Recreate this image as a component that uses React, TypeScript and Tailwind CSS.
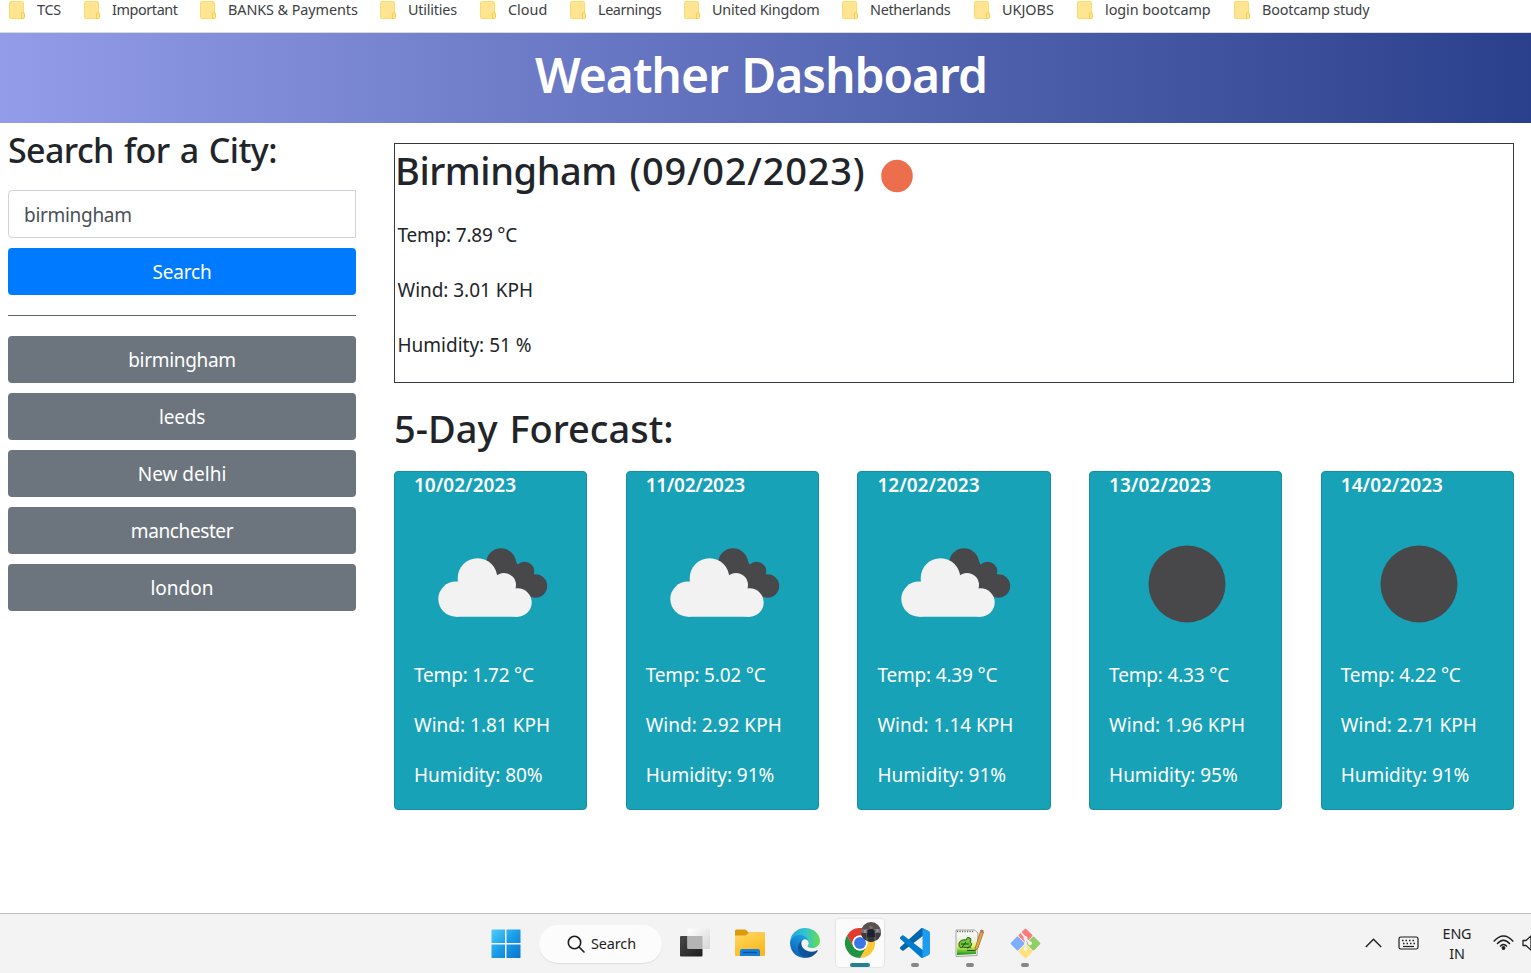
import React from "react";

const bookmarks = [
  { name: "TCS", box: "w-[75px]", track: "tracking-[-0.3px]" },
  { name: "Important", box: "w-[116px]", track: "tracking-[-0.4px]" },
  { name: "BANKS & Payments", box: "w-[180px]", track: "tracking-[-0.08px]" },
  { name: "Utilities", box: "w-[100px]", track: "tracking-[-0.2px]" },
  { name: "Cloud", box: "w-[90px]", track: "" },
  { name: "Learnings", box: "w-[114px]", track: "tracking-[-0.4px]" },
  { name: "United Kingdom", box: "w-[158px]", track: "tracking-[-0.2px]" },
  { name: "Netherlands", box: "w-[132px]", track: "tracking-[-0.3px]" },
  { name: "UKJOBS", box: "w-[103px]", track: "" },
  { name: "login bootcamp", box: "w-[157px]", track: "tracking-[-0.05px]" },
  { name: "Bootcamp study", box: "w-[157px]", track: "tracking-[-0.2px]" },
];

const cities = [
  { name: "birmingham", track: "tracking-[-0.3px]" },
  { name: "leeds", track: "tracking-[-0.2px]" },
  { name: "New delhi", track: "" },
  { name: "manchester", track: "tracking-[-0.4px]" },
  { name: "london", track: "" },
];

const forecast = [
  { date: "10/02/2023", track: "", icon: "cloud", temp: "1.72", wind: "1.81", humidity: "80" },
  { date: "11/02/2023", track: "tracking-[-0.3px]", icon: "cloud", temp: "5.02", wind: "2.92", humidity: "91" },
  { date: "12/02/2023", track: "", icon: "cloud", temp: "4.39", wind: "1.14", humidity: "91" },
  { date: "13/02/2023", track: "", icon: "clear", temp: "4.33", wind: "1.96", humidity: "95" },
  { date: "14/02/2023", track: "", icon: "clear", temp: "4.22", wind: "2.71", humidity: "91" },
];

function Folder() {
  return (
    <svg width="16" height="18" viewBox="0 0 16 18" className="shrink-0">
      <rect x="0.5" y="0.5" width="14" height="17" rx="1" fill="#ffe591" stroke="#fbdc6a" />
      <path d="M12.5 17.5v-4.5q0-1.500 1.500-1.500t1.500 1.500v3q0 1.500-1.500 1.500z" fill="#ffe591" stroke="#f5cf4e" />
    </svg>
  );
}

function CloudIcon() {
  return (
    <svg width="120" height="84" viewBox="0 0 120 84">
      <g fill="#484749">
        <circle cx="67" cy="21" r="14.800" />
        <circle cx="90.500" cy="29.500" r="9.800" />
        <circle cx="101.500" cy="44" r="11.700" />
        <path d="M56 30 80 14 84 24 100 34 104 50 98 55 84 50Z" />
      </g>
      <g fill="#f2f2f2">
        <circle cx="43.500" cy="36" r="19.800" />
        <circle cx="21.900" cy="57.100" r="17.600" />
        <circle cx="70" cy="43" r="12" />
        <circle cx="83.500" cy="60.500" r="14.200" />
        <path d="M22 74.700 24 36H62L81 44 84 74.700Z" />
      </g>
    </svg>
  );
}

function ClearIcon() {
  return (
    <svg width="120" height="84" viewBox="0 0 120 84">
      <circle cx="58" cy="42" r="38.500" fill="#484749" />
    </svg>
  );
}

function WindowsLogo() {
  return (
    <svg width="30" height="30" viewBox="0 0 30 30" className="shrink-0">
      <defs>
        <linearGradient id="win" x1="0" y1="0" x2="30" y2="30" gradientUnits="userSpaceOnUse">
          <stop stopColor="#4fd0fb" />
          <stop offset="0.500" stopColor="#1a9be6" />
          <stop offset="1" stopColor="#0a72d0" />
        </linearGradient>
      </defs>
      <path fill="url(#win)" d="M1 .5h13v13.500H.5V1zM15.500.5H29l.500.500v13H15.500zM.5 15.500H14V29H1l-.500-.5zM15.500 15.500h14v13l-.500.500H15.500z" />
    </svg>
  );
}

function TaskView() {
  return (
    <svg width="32" height="30" viewBox="0 0 32 30">
      <defs>
        <linearGradient id="tv1" x1="0" y1="0" x2="1" y2="1">
          <stop stopColor="#484848" />
          <stop offset="1" stopColor="#1e1e1e" />
        </linearGradient>
        <linearGradient id="tv2" x1="0" y1="0" x2="1" y2="1">
          <stop stopColor="#fff" />
          <stop offset="1" stopColor="#d6d6d6" />
        </linearGradient>
      </defs>
      <rect x="1" y="8" width="22.500" height="20.500" rx="1" fill="url(#tv1)" />
      <rect x="8.500" y="0.500" width="22.500" height="20.500" rx="1" fill="url(#tv2)" />
      <path d="M8.500 8h15v13h-14q-1 0-1-1z" fill="#b4b4b4" />
    </svg>
  );
}

function Explorer() {
  return (
    <svg width="32" height="30" viewBox="0 0 32 30">
      <defs>
        <linearGradient id="ex1" x1="0" y1="0" x2="0.500" y2="1">
          <stop stopColor="#ffd965" />
          <stop offset="1" stopColor="#fbb91c" />
        </linearGradient>
      </defs>
      <path d="M1 3q0-1.500 1.500-1.500h8q1.500 0 2.500 1.200L14.500 4.500H30q1 0 1 1V12H1z" fill="#dc9a0a" />
      <path d="M1 7.500h9.500q1.500 0 2.500-1L15 4.500h15q1 0 1 1V27q0 1-1 1H2q-1 0-1-1z" fill="url(#ex1)" />
      <path d="M6 28v-5q0-2 2-2h16q2 0 2 2v5z" fill="#1680d8" />
      <path d="M9.500 24.500h13" stroke="#0b4fa0" strokeWidth="1.400" strokeLinecap="round" />
    </svg>
  );
}

function Edge() {
  return (
    <svg width="30" height="30" viewBox="0 0 256 256">
      <defs>
        <linearGradient id="ed1" x1="60" y1="177" x2="241" y2="177" gradientUnits="userSpaceOnUse">
          <stop stopColor="#0c59a4" />
          <stop offset="1" stopColor="#114a8b" />
        </linearGradient>
        <linearGradient id="ed2" x1="150" y1="90" x2="40" y2="240" gradientUnits="userSpaceOnUse">
          <stop stopColor="#1b9de2" />
          <stop offset="0.500" stopColor="#1383d0" />
          <stop offset="1" stopColor="#0f5fb4" />
        </linearGradient>
        <linearGradient id="ed3" x1="10" y1="90" x2="245" y2="90" gradientUnits="userSpaceOnUse">
          <stop stopColor="#25a8df" />
          <stop offset="0.500" stopColor="#2fc3d4" />
          <stop offset="1" stopColor="#60dc57" />
        </linearGradient>
      </defs>
      <path fill="url(#ed1)" d="M231 190.500c-3.400 1.800-6.900 3.400-10.500 4.700a101.700 101.700 0 0 1-35.900 6.500c-47.300 0-88.500-32.500-88.500-74.300a31.500 31.500 0 0 1 16.400-27.300c-42.800 1.800-53.800 46.400-53.800 72.500 0 74 68.100 81.400 82.800 81.400 7.900 0 19.800-2.300 27-4.600l1.300-.4a128.300 128.300 0 0 0 66.600-52.800 4 4 0 0 0-5.400-5.700Z" />
      <path fill="url(#ed2)" d="M105.700 241.400a79.200 79.200 0 0 1-22.700-21.300 80.700 80.700 0 0 1 29.500-120c3.200-1.500 8.500-4.100 15.600-4a32.400 32.400 0 0 1 25.700 13 31.900 31.900 0 0 1 6.300 18.700c0-.2 24.500-79.600-80-79.600-43.900 0-80 41.700-80 78.200a130.200 130.200 0 0 0 12.100 56 128 128 0 0 0 156.400 67 75.500 75.500 0 0 1-62.900-8Z" />
      <path fill="url(#ed3)" d="M152.300 148.900c-.9 1-3.400 2.500-3.400 5.600 0 2.600 1.700 5.200 4.800 7.300 14.300 10 41.400 8.600 41.500 8.600a59.600 59.600 0 0 0 30.300-8.300 61.400 61.400 0 0 0 30.400-52.900c.3-22.400-8-37.300-11.300-43.900C223.500 23.900 177.700 0 128 0A128 128 0 0 0 0 126.200c.5-36.500 36.800-66 80-66 3.500 0 23.500.3 42 10.100 16.300 8.600 24.900 19 30.800 29.200 6.200 10.700 7.300 24.100 7.300 29.500 0 5.300-2.700 13.300-7.800 19.900Z" />
    </svg>
  );
}

function Chrome() {
  return (
    <svg width="30" height="30" viewBox="0 0 48 48">
      <path d="M3.200 12A24 24 0 0 1 44.800 12L44.800 12H24A12 12 0 0 0 13.600 30Z" fill="#e33b2e" />
      <path d="M44.800 12A24 24 0 0 1 24 48L34.400 30A12 12 0 0 0 24 12Z" fill="#fcc934" />
      <path d="M24 48A24 24 0 0 1 3.200 12L13.600 30A12 12 0 0 0 34.400 30Z" fill="#229342" />
      <circle cx="24" cy="24" r="12" fill="#fff" />
      <circle cx="24" cy="24" r="9.500" fill="#3b78e7" />
    </svg>
  );
}

function Avatar() {
  return (
    <svg width="20" height="20" viewBox="0 0 20 20" className="absolute left-[25px] top-[3px]">
      <defs>
        <clipPath id="av">
          <circle cx="10" cy="10" r="10" />
        </clipPath>
      </defs>
      <g clipPath="url(#av)">
        <rect width="20" height="20" fill="#57514f" />
        <rect y="7" width="20" height="4" fill="#77717a" />
        <path d="M0 11h5v9H0zM15 11h5v9h-5z" fill="#3d3a40" />
        <path d="M6.500 8l3.500-1.500L13.500 8l.5 7H6z" fill="#1b2132" />
        <circle cx="10" cy="5.500" r="1.800" fill="#8c6a5b" />
        <path d="M7 15h6v5H7z" fill="#383539" />
        <path d="M3 8h2v3H3zM15.500 7h2v3h-2z" fill="#9b9697" />
      </g>
    </svg>
  );
}

function VsCode() {
  return (
    <svg width="30" height="30" viewBox="0 0 100 100">
      <path d="M96.500 10.800 75.900.9a6.200 6.200 0 0 0-7.100 1.200L1.300 63.700a4.200 4.200 0 0 0 0 6.100l5.500 5a4.200 4.200 0 0 0 5.300.3L93.400 13.400c2.700-2.100 6.600-.1 6.600 3.300v-.3a6.200 6.200 0 0 0-3.500-5.600Z" fill="#0065a9" />
      <path d="M96.500 89.200 75.900 99.100a6.200 6.200 0 0 1-7.100-1.200L1.300 36.300a4.200 4.200 0 0 1 0-6.100l5.500-5a4.200 4.200 0 0 1 5.300-.3l81.300 61.700c2.700 2.100 6.600.1 6.600-3.300v.3a6.200 6.200 0 0 1-3.500 5.600Z" fill="#007acc" />
      <path d="M75.900 99.100a6.200 6.200 0 0 1-7.100-1.200c2.300 2.300 6.200.7 6.200-2.600V4.700c0-3.300-3.900-4.900-6.200-2.600A6.200 6.200 0 0 1 75.900.9l20.600 9.900a6.200 6.200 0 0 1 3.500 5.600v67.200a6.200 6.200 0 0 1-3.500 5.600Z" fill="#1f9cf0" />
    </svg>
  );
}

function Notepad() {
  return (
    <svg width="30" height="30" viewBox="0 0 30 30">
      <defs>
        <linearGradient id="np" x1="0" y1="0" x2="0" y2="1">
          <stop stopColor="#f4f7f0" />
          <stop offset="0.350" stopColor="#e9efd0" />
          <stop offset="0.550" stopColor="#f0f060" />
          <stop offset="0.750" stopColor="#7fd238" />
          <stop offset="1" stopColor="#168a22" />
        </linearGradient>
      </defs>
      <path d="M1 2h18.500l3.500 3-1 22.500-21 1z" fill="#f7f7f5" stroke="#8f908c" strokeWidth="0.800" />
      <path d="M2 7h19.500l-.5 19-19 1z" fill="url(#np)" />
      <path d="M2 3.500h17" stroke="#6b6b6b" strokeWidth="1.600" strokeDasharray="1.200 1.300" />
      <path d="M4 15q2-4 7-3 1-4 4-2 2 2 0 4 3 1 1 4-4 3-8 1-4 2-4-2z" fill="#6fc936" stroke="#24471f" strokeWidth="0.900" />
      <path d="M6 16h8M7 19l4-5M12 20q3-1 4 0M12 22.500h8" stroke="#1e3a1b" strokeWidth="0.900" fill="none" />
      <path d="M26 2 20.500 19 20 23 23 20 28.500 4z" fill="#eaa93b" stroke="#8a5b24" strokeWidth="0.700" />
      <path d="M26 1.500 28.800 2.500 28 5 25.300 4z" fill="#c66b5f" />
    </svg>
  );
}

function GitLogo() {
  return (
    <svg width="31" height="31" viewBox="0 0 31 31">
      <g transform="rotate(45 15.500 15.500)">
        <rect x="4.700" y="4.700" width="10.400" height="10.400" rx="1" fill="#ff7b7b" />
        <rect x="15.900" y="4.700" width="10.400" height="10.400" rx="1" fill="#91cf63" />
        <rect x="4.700" y="15.900" width="10.400" height="10.400" rx="1" fill="#7faeff" />
        <rect x="15.900" y="15.900" width="10.400" height="10.400" rx="1" fill="#ffe07a" />
      </g>
      <path d="M11 4.500 15.500 10V21M15.500 10.500 20 15" stroke="#f3f3f3" strokeWidth="1.700" fill="none" />
      <circle cx="15.500" cy="10" r="2" fill="#f3f3f3" />
      <circle cx="20" cy="15.200" r="2" fill="#f3f3f3" />
      <circle cx="15.500" cy="21" r="2" fill="#f3f3f3" />
    </svg>
  );
}

function TaskItem({ children, state }: { children: React.ReactNode; state?: "active" | "open" }) {
  return (
    <div className="flex w-[55px] shrink-0 justify-center">
      <div
        className={
          state === "active"
            ? "relative flex h-12 w-12 items-center justify-center rounded bg-[#fbfbfb] shadow-[0_0_1px_1px_#e6e6e6]"
            : "relative flex h-12 w-12 items-center justify-center"
        }
      >
        {children}
        {state === "active" && <span className="absolute bottom-0 left-[14px] h-1 w-5 rounded-full bg-[#24808f]" />}
        {state === "open" && <span className="absolute bottom-0 left-5 h-1 w-2 rounded-full bg-[#868686]" />}
      </div>
    </div>
  );
}

function Taskbar() {
  return (
    <footer className="flex h-[60px] shrink-0 items-center border-t border-[#bdbdbd] bg-[#f3f3f3] pl-[491px]">
      <WindowsLogo />
      <div className="ml-[18px] flex h-[38px] w-[123px] shrink-0 items-center rounded-full bg-[#fcfcfc] pl-7 shadow-[0_1px_1px_#dedede]">
        <svg width="18" height="18" viewBox="0 0 18 18" fill="none" stroke="#1d1d1d" strokeWidth="1.600" strokeLinecap="round">
          <circle cx="7.500" cy="7.500" r="6.200" />
          <path d="m12 12 5 5" />
        </svg>
        <span className="ml-1.5 text-[14.400px] tracking-[-0.1px] text-[#1c1c1c]">Search</span>
      </div>
      <div className="ml-[5.5px] flex shrink-0 pb-px">
        <TaskItem><TaskView /></TaskItem>
        <TaskItem><Explorer /></TaskItem>
        <TaskItem><Edge /></TaskItem>
        <TaskItem state="active"><Chrome /><Avatar /></TaskItem>
        <TaskItem state="open"><VsCode /></TaskItem>
        <TaskItem state="open"><Notepad /></TaskItem>
        <TaskItem state="open"><GitLogo /></TaskItem>
      </div>
      <div className="ml-[312.5px] flex shrink-0 items-center text-[#1f1f1f]">
        <svg width="17" height="10" viewBox="0 0 17 10" fill="none" stroke="currentColor" strokeWidth="1.400" className="mb-px">
          <path d="M.8 9 8.500 1.300 16.200 9" />
        </svg>
        <svg width="21" height="14" viewBox="0 0 21 14" fill="none" stroke="currentColor" strokeWidth="1.200" className="mb-0.5 ml-4">
          <rect x="1" y="1" width="19" height="12" rx="1.800" />
          <path d="M4 4.500h13.500M5 7.500h12" strokeWidth="1.500" strokeDasharray="1.500 2" />
          <path d="M5 10.500h11" />
        </svg>
        <div className="ml-[19px] w-[38px] text-center text-[14.400px] leading-5 tracking-[-0.2px]">
          <div>ENG</div>
          <div>IN</div>
        </div>
        <svg width="21" height="16" viewBox="0 0 21 16" fill="none" stroke="currentColor" strokeWidth="1.300" className="mb-0.5 ml-[17px]">
          <path d="M.7 6.500Q10.500-4.500 20.300 6.500M4 9Q10.500 1.500 17 9M7 11.500Q10.500 7.500 14 11.500" />
          <circle cx="10.500" cy="13" r="1.900" fill="currentColor" stroke="none" />
        </svg>
        <svg width="12" height="16" viewBox="0 0 12 16" fill="none" stroke="currentColor" strokeWidth="1.300" className="mb-px ml-2">
          <path d="M1 5.500h3L9 1v14l-5-4.500H1z" strokeLinejoin="round" />
        </svg>
      </div>
    </footer>
  );
}

export default function App() {
  return (
    <div className="flex h-[973px] w-[1531px] flex-col overflow-hidden bg-white font-['Noto_Sans',sans-serif] text-[#212529]">
      <nav className="flex h-[33px] shrink-0 items-start border-b border-[#d9d9d9] pl-[9px] pt-px">
        {bookmarks.map((b) => (
          <div key={b.name} className={"flex shrink-0 items-center text-[#3c4043] " + b.box}>
            <Folder />
            <span className={"ml-3 whitespace-nowrap text-[14.400px] leading-[18px] " + b.track}>{b.name}</span>
          </div>
        ))}
      </nav>

      <header className="flex h-[90px] shrink-0 justify-center bg-linear-to-r from-[#939ce8] to-[#2b408c] pr-[9px]">
        <h1 className="text-[48px] font-semibold leading-[84px] tracking-[-1.050px] text-white [word-spacing:2px]">Weather Dashboard</h1>
      </header>

      <main className="flex grow">
        <aside className="ml-2 w-[348px] shrink-0 pt-[6px]">
          <h3 className="text-[34px] font-medium leading-[42px] tracking-[-0.6px] [word-spacing:2px]">Search for a City:</h3>
          <input
            className="mt-[19px] block h-12 w-full rounded-l border border-[#ced4da] px-[15px] pt-0.5 text-[19px] tracking-[-0.3px] text-[#495057] outline-none"
            defaultValue="birmingham"
          />
          <button className="mt-[10px] block h-[47px] w-full rounded bg-[#007bff] pt-0.5 text-[19px] tracking-[-0.2px] text-white">Search</button>
          <hr className="my-5 border-t border-[#5f686f]" />
          <div className="flex flex-col gap-[10px]">
            {cities.map((c) => (
              <button key={c.name} className={"h-[47px] w-full rounded bg-[#6c757d] pt-0.5 text-[19px] text-white " + c.track}>
                {c.name}
              </button>
            ))}
          </div>
        </aside>

        <div className="ml-[38px] w-[1120px] shrink-0 pt-5">
          <section className="h-[240px] border border-[#343a40]">
            <div className="flex h-[56px] items-center">
              <h2 className="flex gap-[12.5px] pb-1 text-[38px] font-medium leading-[52px]">
                <span className="tracking-[-0.45px]">Birmingham</span>
                <span className="tracking-[0.75px]">(09/02/2023)</span>
              </h2>
              <svg width="32" height="34" viewBox="0 0 32 34" className="ml-[15.5px] mt-[7px]">
                <ellipse cx="16" cy="17" rx="15.800" ry="16.200" fill="#ec6e4c" />
              </svg>
            </div>
            <div className="flex flex-col gap-[25px] pl-[2.5px] pt-5 text-[19px] leading-[30px]">
              <p className="tracking-[-0.2px]">Temp: 7.89 °C</p>
              <p className="tracking-[-0.04px]">Wind: 3.01 KPH</p>
              <p>Humidity: 51 %</p>
            </div>
          </section>

          <h2 className="mt-[21px] text-[38px] font-medium leading-[48px] [word-spacing:2px]">5-Day Forecast:</h2>

          <div className="mt-[19px] flex justify-between">
            {forecast.map((f) => (
              <article key={f.date} className="h-[339px] w-[193.2px] rounded border border-[#158fa2] bg-[#17a2b8] pl-[19px] text-[19px] text-white">
                <h5 className={"font-semibold leading-[26px] " + f.track}>{f.date}</h5>
                <div className="mt-11 h-[84px] pl-5">{f.icon === "cloud" ? <CloudIcon /> : <ClearIcon />}</div>
                <div className="mt-[34px] flex flex-col gap-5 leading-[30px]">
                  <p className="tracking-[-0.18px]">{"Temp: " + f.temp + " °C"}</p>
                  <p>{"Wind: " + f.wind + " KPH"}</p>
                  <p className="tracking-[-0.05px]">{"Humidity: " + f.humidity + "%"}</p>
                </div>
              </article>
            ))}
          </div>
        </div>
      </main>

      <Taskbar />
    </div>
  );
}
